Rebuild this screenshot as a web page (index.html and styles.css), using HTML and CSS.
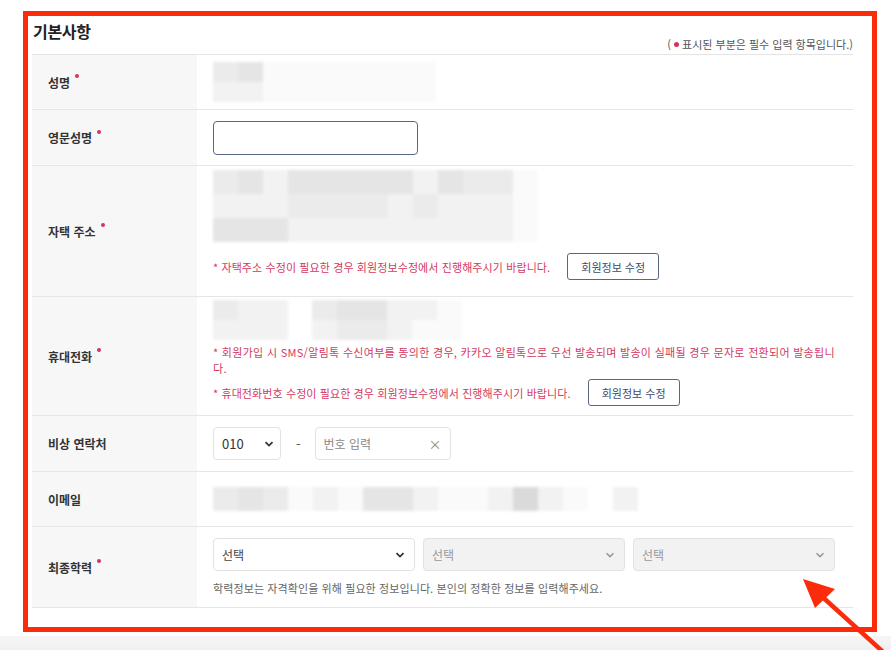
FILE: index.html
```html
<!DOCTYPE html>
<html lang="ko">
<head>
    <meta charset="UTF-8">
    <meta name="viewport" content="width=device-width, initial-scale=1.0">
    <title>기본사항</title>
    <link rel="stylesheet" href="styles.css">
</head>
<body>
    <div class="page">
        <div class="frame">
            <!-- Section header -->
            <div class="section-head">
                <h2 class="section-title">기본사항</h2>
                <p class="section-note">( <span class="dot"></span> 표시된 부분은 필수 입력 항목입니다.)</p>
            </div>

            <div class="form-table">
                <!-- 성명 -->
                <div class="row row-name">
                    <div class="label">성명<span class="req"></span></div>
                    <div class="value">
                        <div class="mosaic">
                            <div class="mrow">
                                <span class="mc tall m2"></span><span class="mc tall m3"></span><span class="mc tall wide m0"></span>
                            </div>
                            <div class="mrow">
                                <span class="mc tall m1"></span><span class="mc tall m1"></span><span class="mc tall wide m0"></span>
                            </div>
                        </div>
                    </div>
                </div>

                <!-- 영문성명 -->
                <div class="row row-eng">
                    <div class="label">영문성명<span class="req"></span></div>
                    <div class="value">
                        <input class="text-input" type="text">
                    </div>
                </div>

                <!-- 자택 주소 -->
                <div class="row row-addr">
                    <div class="label">자택 주소<span class="req"></span></div>
                    <div class="value">
                        <div class="mosaic">
                            <div class="mrow">
                                <span class="mc m2"></span><span class="mc m3"></span><span class="mc m1"></span><span class="mc m3"></span><span class="mc m3"></span><span class="mc m3"></span><span class="mc m3"></span><span class="mc m3"></span><span class="mc m1"></span><span class="mc m3"></span><span class="mc m2"></span><span class="mc m2"></span><span class="mc m0"></span>
                            </div>
                            <div class="mrow">
                                <span class="mc m1"></span><span class="mc m1"></span><span class="mc m1"></span><span class="mc m2"></span><span class="mc m2"></span><span class="mc m2"></span><span class="mc m2"></span><span class="mc m1"></span><span class="mc m2"></span><span class="mc m1"></span><span class="mc m1"></span><span class="mc m1"></span><span class="mc m0"></span>
                            </div>
                            <div class="mrow">
                                <span class="mc m3"></span><span class="mc m3"></span><span class="mc m3"></span><span class="mc m1"></span><span class="mc m1"></span><span class="mc m1"></span><span class="mc m1"></span><span class="mc m1"></span><span class="mc m1"></span><span class="mc m1"></span><span class="mc m1"></span><span class="mc m1"></span><span class="mc m0"></span>
                            </div>
                        </div>
                        <div class="note-line">
                            <span class="warn">* 자택주소 수정이 필요한 경우 회원정보수정에서 진행해주시기 바랍니다.</span>
                            <button class="btn-line">회원정보 수정</button>
                        </div>
                    </div>
                </div>

                <!-- 휴대전화 -->
                <div class="row row-phone">
                    <div class="label">휴대전화<span class="req"></span></div>
                    <div class="value">
                        <div class="mosaic">
                            <div class="mrow">
                                <span class="mc half m2"></span><span class="mc half m1"></span><span class="mc half m1"></span><span class="mc half gap"></span><span class="mc half m2"></span><span class="mc half m3"></span><span class="mc half m3"></span><span class="mc half m1"></span><span class="mc half m1"></span><span class="mc half m0"></span>
                            </div>
                            <div class="mrow">
                                <span class="mc half m1"></span><span class="mc half m1"></span><span class="mc half m1"></span><span class="mc half gap"></span><span class="mc half m1"></span><span class="mc half m2"></span><span class="mc half m2"></span><span class="mc half m1"></span><span class="mc half m0"></span><span class="mc half m0"></span>
                            </div>
                        </div>
                        <p class="warn warn-block">* 회원가입 시 SMS/알림톡 수신여부를 동의한 경우, 카카오 알림톡으로 우선 발송되며 발송이 실패될 경우 문자로 전환되어 발송됩니다.</p>
                        <div class="note-line">
                            <span class="warn">* 휴대전화번호 수정이 필요한 경우 회원정보수정에서 진행해주시기 바랍니다.</span>
                            <button class="btn-line">회원정보 수정</button>
                        </div>
                    </div>
                </div>

                <!-- 비상 연락처 -->
                <div class="row row-emergency">
                    <div class="label">비상 연락처</div>
                    <div class="value inline">
                        <div class="select select-sm">
                            <span>010</span>
                            <svg class="chev" width="10" height="6" viewBox="0 0 10 6"><path d="M1.5 1.2 5 4.6 8.5 1.2" fill="none" stroke="#333" stroke-width="1.8"/></svg>
                        </div>
                        <span class="dash">-</span>
                        <div class="num-input">
                            <span class="placeholder">번호 입력</span>
                            <span class="clear">×</span>
                        </div>
                    </div>
                </div>

                <!-- 이메일 -->
                <div class="row row-email">
                    <div class="label">이메일</div>
                    <div class="value">
                        <div class="mosaic">
                            <div class="mrow">
                                <span class="mc m2"></span><span class="mc m3"></span><span class="mc m2"></span><span class="mc m0"></span><span class="mc m1"></span><span class="mc m0"></span><span class="mc m3"></span><span class="mc m3"></span><span class="mc m1"></span><span class="mc m0"></span><span class="mc m0"></span><span class="mc m1"></span><span class="mc m4"></span><span class="mc m1"></span><span class="mc m0"></span><span class="mc gap"></span><span class="mc m1"></span>
                            </div>
                        </div>
                    </div>
                </div>

                <!-- 최종학력 -->
                <div class="row row-edu">
                    <div class="label">최종학력<span class="req"></span></div>
                    <div class="value">
                        <div class="select-group">
                            <div class="select">
                                <span>선택</span>
                                <svg class="chev" width="10" height="6" viewBox="0 0 10 6"><path d="M1.5 1.2 5 4.6 8.5 1.2" fill="none" stroke="#333" stroke-width="1.8"/></svg>
                            </div>
                            <div class="select disabled">
                                <span>선택</span>
                                <svg class="chev" width="10" height="6" viewBox="0 0 10 6"><path d="M1.5 1.2 5 4.6 8.5 1.2" fill="none" stroke="#999" stroke-width="1.6"/></svg>
                            </div>
                            <div class="select disabled">
                                <span>선택</span>
                                <svg class="chev" width="10" height="6" viewBox="0 0 10 6"><path d="M1.5 1.2 5 4.6 8.5 1.2" fill="none" stroke="#999" stroke-width="1.6"/></svg>
                            </div>
                        </div>
                        <p class="help">학력정보는 자격확인을 위해 필요한 정보입니다. 본인의 정확한 정보를 입력해주세요.</p>
                    </div>
                </div>
            </div>
        </div>
        <div class="page-foot"></div>

        <!-- Annotation arrow -->
        <svg class="arrow" width="120" height="100" viewBox="0 0 120 100">
            <line x1="105" y1="95" x2="30" y2="27" stroke="#fa2c0c" stroke-width="4.5"/>
            <polygon points="16,14 48,24 28,43" fill="#fa2c0c"/>
        </svg>
    </div>
</body>
</html>
```

FILE: styles.css
```css
/* Base */
* {
    margin: 0;
    padding: 0;
    box-sizing: border-box;
}

body {
    background: #fff;
    font-family: "Noto Sans CJK KR", "Noto Sans", sans-serif;
    color: #333;
    overflow: hidden;
}

.page {
    position: relative;
    width: 891px;
    height: 650px;
    padding-top: 11px;
}

/* Red highlight frame */
.frame {
    margin-left: 23px;
    width: 854px;
    height: 621px;
    border: 5px solid #fa2c0c;
    padding: 0 19px 0 4px;
}

.page-foot {
    margin-top: 4px;
    height: 14px;
    background: linear-gradient(#f6f6f6, #f0f0f0);
}

/* Section header */
.section-head {
    display: flex;
    justify-content: space-between;
    align-items: flex-end;
    height: 39px;
    border-bottom: 1px solid #e4e4e4;
}

.section-title {
    font-size: 16px;
    font-weight: 700;
    color: #222;
    padding: 0 0 11px 1px;
    letter-spacing: -0.3px;
}

.section-note {
    font-size: 11px;
    color: #555;
    padding-bottom: 2px;
}

.dot {
    display: inline-block;
    width: 5px;
    height: 5px;
    border-radius: 50%;
    background: #d2335f;
    vertical-align: 2px;
}

/* Table rows */
.row {
    display: grid;
    grid-template-columns: 165px 1fr;
    border-bottom: 1px solid #e6e6e6;
}

.label {
    background: #f7f7f7;
    display: flex;
    align-items: center;
    padding-left: 16px;
    font-size: 12px;
    font-weight: 700;
    color: #333;
}

.req {
    width: 4px;
    height: 4px;
    border-radius: 50%;
    background: #d2335f;
    margin-left: 5px;
    align-self: center;
    transform: translateY(-6px);
}

.value {
    padding: 0 12px 0 16px;
    display: flex;
    flex-direction: column;
    justify-content: center;
}

.value.inline {
    flex-direction: row;
    align-items: center;
    justify-content: flex-start;
}

.row-name { height: 55px; }
.row-eng { height: 56px; }
.row-addr { height: 131px; }
.row-phone { height: 119px; }
.row-emergency { height: 56px; }
.row-email { height: 55px; }
.row-edu { height: 81px; }

.row-addr .value {
    justify-content: flex-start;
    padding-top: 4px;
}

.row-phone .value {
    justify-content: flex-start;
    padding-top: 3px;
}

.row-edu .value {
    justify-content: flex-start;
    padding-top: 11px;
}

/* Blurred personal data */
.mosaic {
    display: flex;
    flex-direction: column;
    filter: blur(1.5px);
}

.mrow {
    display: flex;
}

.mc {
    width: 25px;
    height: 24px;
}

.mc.tall { height: 20px; }
.mc.wide { width: 173px; }
.mc.half { height: 20px; }
.mc.half.gap { width: 24px; }

.m0 { background: #fafafa; }
.m1 { background: #f2f2f2; }
.m2 { background: #ebebeb; }
.m3 { background: #e5e5e5; }
.m4 { background: #dadada; }
.gap { background: #fff; }

/* Inputs */
.text-input {
    width: 205px;
    height: 34px;
    border: 1px solid #5a6784;
    border-radius: 4px;
    outline: none;
    background: #fff;
}

.select {
    display: flex;
    justify-content: space-between;
    align-items: center;
    height: 33px;
    width: 202px;
    padding: 0 9px 0 8px;
    border: 1px solid #e2e2e2;
    border-radius: 4px;
    background: #fff;
    font-size: 12px;
    color: #444;
}

.select.disabled {
    background: #f2f2f2;
    color: #999;
}

.select-sm {
    width: 68px;
    font-size: 13px;
    color: #333;
    padding-right: 6px;
}

.select-group {
    display: flex;
    gap: 8px;
}

.dash {
    margin: 0 14px 0 15px;
    font-size: 13px;
    color: #555;
}

.num-input {
    display: flex;
    justify-content: space-between;
    align-items: center;
    width: 136px;
    height: 33px;
    padding: 0 8px;
    border: 1px solid #e2e2e2;
    border-radius: 4px;
    font-size: 12px;
}

.placeholder {
    color: #888;
}

.clear {
    color: #888;
    font-size: 13px;
}

/* Notices */
.warn {
    font-size: 11px;
    color: #d4395f;
    line-height: 16px;
    letter-spacing: 0.1px;
}

.warn-block {
    margin-top: 4px;
    padding-right: 2px;
    letter-spacing: 0.3px;
}

.note-line {
    display: flex;
    align-items: center;
    gap: 17px;
}

.row-addr .note-line {
    margin-top: 11px;
}

.row-phone .note-line {
    margin-top: 3px;
}

.btn-line {
    height: 27px;
    padding: 0 13px;
    border: 1px solid #5a6784;
    border-radius: 3px;
    background: #fff;
    color: #3c4a68;
    font-family: inherit;
    font-size: 11px;
}

.help {
    margin-top: 9px;
    font-size: 11px;
    line-height: 16px;
    color: #666;
    letter-spacing: 0.1px;
}

/* Annotation */
.arrow {
    position: absolute;
    left: 787px;
    top: 565px;
}
```
